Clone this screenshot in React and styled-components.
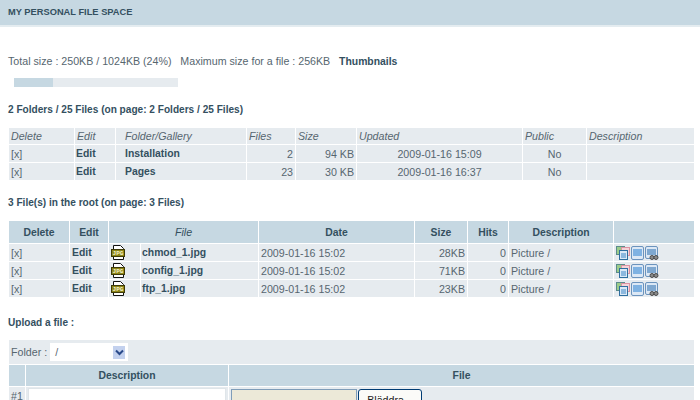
import React from "react";
import styled, { createGlobalStyle } from "styled-components";

const GlobalStyle = createGlobalStyle`
  html, body {
    margin: 0;
    padding: 0;
    background: #fff;
    overflow: hidden;
  }
  body {
    font-family: "Liberation Sans", Arial, sans-serif;
    font-size: 8pt;
    color: #56666f;
  }
`;

const Page = styled.div`
  width: 700px;
  height: 400px;
  overflow: hidden;
`;
const TitleBar = styled.div`
  height: 25px;
  line-height: 25px;
  padding-left: 8px;
  background: #c6d8e2;
  border-bottom: 2px solid #e4ecf0;
  font-size: 9.3px;
  font-weight: bold;
  color: #34505f;
`;
const Content = styled.div`
  padding: 0 5px 0 8px;
`;
const SizeLine = styled.div`
  margin-top: 27px;
  height: 14px;
  line-height: 14px;
  white-space: pre;
`;
const Thumbs = styled.b`
  font-size: 10.4px;
  color: #34505f;
`;
const Meter = styled.div`
  width: 164px;
  height: 9px;
  margin: 10px 0 0 6px;
  background: #e6ebef;
`;
const MeterFill = styled.div`
  height: 100%;
  background: #c6d8e2;
`;
const Heading = styled.div`
  height: 14px;
  line-height: 14px;
  margin-top: ${(p) => p.$top}px;
  font-size: 10.1px;
  font-weight: bold;
  color: #34505f;
`;
const Table = styled.table`
  width: 687px;
  margin: ${(p) => p.$top}px 0 0 0;
  border-collapse: separate;
  border-spacing: 1px;
  table-layout: fixed;
  font-size: 8pt;
`;
const Th = styled.th`
  height: ${(p) => p.$h || (p.$plain ? 16 : 22)}px;
  padding: 0 0 0 ${(p) => p.$indent || (p.$plain ? 2 : 0)}px;
  background: ${(p) => (p.$plain ? "#e6ebef" : "#c6d8e2")};
  color: ${(p) => (p.$plain ? "#56666f" : "#34505f")};
  font-size: ${(p) => (p.$plain || p.$italic ? "8pt" : "10.4px")};
  font-weight: ${(p) => (p.$plain || p.$italic ? "normal" : "bold")};
  font-style: ${(p) => (p.$plain || p.$italic ? "italic" : "normal")};
  text-align: ${(p) => (p.$plain ? "left" : "center")};
`;
const Td = styled.td`
  height: ${(p) => p.$h || 17}px;
  padding: 0 2px 0 ${(p) => p.$indent || 2}px;
  background: #e6ebef;
  text-align: ${(p) => p.$align || "left"};
  font-size: ${(p) => (p.$bold ? "10.4px" : "8pt")};
  font-weight: ${(p) => (p.$bold ? "bold" : "normal")};
  color: ${(p) => (p.$bold ? "#34505f" : "#56666f")};
  white-space: nowrap;
  overflow: hidden;
`;
const UploadCell = styled(Td)`
  height: 24px;
  padding-top: ${(p) => p.$pad}px;
  vertical-align: top;
`;
const Actions = styled.span`
  display: flex;
`;
const Folder = styled.div`
  display: flex;
  align-items: center;
  width: 685px;
  height: 24px;
  margin: 10px 0 0 1px;
  padding-left: 2px;
  box-sizing: border-box;
  background: #e6ebef;
`;
const FolderSelect = styled.span`
  display: flex;
  align-items: center;
  justify-content: space-between;
  width: 78px;
  height: 18px;
  margin-left: 3px;
  padding: 0 3px 0 5px;
  box-sizing: border-box;
  background: #fff;
`;
const SelectArrow = styled.span`
  display: flex;
  align-items: center;
  justify-content: center;
  width: 12px;
  height: 13px;
  background: #c3d1ee;
`;
const UploadTable = styled(Table)`
  margin-top: 0;
`;
const TextInput = styled.div`
  height: 20px;
  background: #fff;
  border: 1px solid #dfe5e9;
  box-sizing: border-box;
`;
const FileRow = styled.div`
  display: flex;
  gap: 1px;
`;
const FilePath = styled.div`
  width: 126px;
  height: 20px;
  background: #ece9d8;
  border: 1px solid #7f9db9;
  box-sizing: border-box;
`;
const Browse = styled.div`
  width: 64px;
  height: 22px;
  line-height: 21px;
  text-align: center;
  background: #fbfbf8;
  border: 1px solid #003c74;
  border-radius: 3px;
  box-sizing: border-box;
  color: #222;
`;

const JpgIcon = () => (
  <svg width="15" height="15" viewBox="0 0 15 15" style={{ display: "block" }}>
    <path d="M2.5 .5h7l3 3v11h-10z" fill="#fff" stroke="#111" />
    <rect x=".5" y="4.5" width="13" height="7" fill="#8c8518" stroke="#3d3a08" />
    <text x="7" y="10.2" textAnchor="middle" fontFamily="Liberation Mono, monospace" fontSize="6" fontWeight="bold" fill="#f6f2c8">
      JPG
    </text>
  </svg>
);

const CopyIcon = () => (
  <svg width="15" height="14" viewBox="0 0 15 14" style={{ display: "block" }}>
    <rect x=".5" y=".5" width="8" height="8" fill="#9ccc8a" stroke="#5b8c8c" />
    <rect x="5.5" y="1.5" width="8" height="8" fill="#f5d3d8" stroke="#dc94a2" />
    <rect x="3.5" y="4.5" width="8" height="9" fill="#dbe9f6" stroke="#2f6f9f" />
    <rect x="5" y="7" width="5" height="5" fill="#8cb8de" />
  </svg>
);
const ViewIcon = () => (
  <svg width="14" height="14" viewBox="0 0 14 14" style={{ display: "block" }}>
    <rect x=".5" y=".5" width="12" height="13" rx="1.5" fill="#dce8f5" stroke="#6b93bd" />
    <rect x="2" y="3" width="9" height="7" fill="#7fb2e2" />
  </svg>
);
const ZoomIcon = () => (
  <svg width="14" height="14" viewBox="0 0 14 14" style={{ display: "block" }}>
    <rect x=".5" y=".5" width="12" height="12" rx="1.5" fill="#dce8f5" stroke="#6b93bd" />
    <rect x="2" y="3" width="9" height="6" fill="#7fa8d0" />
    <circle cx="7" cy="11.5" r="2" fill="#8a8a8a" stroke="#4a4a4a" />
    <circle cx="11" cy="11.5" r="2" fill="#8a8a8a" stroke="#4a4a4a" />
  </svg>
);
const Arrow = () => (
  <svg width="9" height="7" viewBox="0 0 9 7">
    <path d="M1 1.5l3.5 3.5L8 1.5" fill="none" stroke="#2a4a8a" strokeWidth="2" />
  </svg>
);

const folders = [
  { name: "Installation", files: 2, size: "94 KB", updated: "2009-01-16 15:09" },
  { name: "Pages", files: 23, size: "30 KB", updated: "2009-01-16 16:37" },
];
const files = [
  { name: "chmod_1.jpg", size: "28KB" },
  { name: "config_1.jpg", size: "71KB" },
  { name: "ftp_1.jpg", size: "23KB" },
];

export default function App() {
  return (
    <Page>
      <GlobalStyle />
      <TitleBar>MY PERSONAL FILE SPACE</TitleBar>
      <Content>
        <SizeLine>
          Total size : 250KB / 1024KB (24%)   Maximum size for a file : 256KB   <Thumbs>Thumbnails</Thumbs>
        </SizeLine>
        <Meter>
          <MeterFill style={{ width: "24%" }} />
        </Meter>
        <Heading $top={16}>2 Folders / 25 Files (on page: 2 Folders / 25 Files)</Heading>
        <Table $top={10}>
          <colgroup>
            <col width="65" />
            <col width="40" />
            <col width="130" />
            <col width="48" />
            <col width="60" />
            <col width="165" />
            <col width="63" />
            <col />
          </colgroup>
          <thead>
            <tr>
              <Th $plain>Delete</Th>
              <Th $plain>Edit</Th>
              <Th $plain $indent={9}>Folder/Gallery</Th>
              <Th $plain>Files</Th>
              <Th $plain>Size</Th>
              <Th $plain>Updated</Th>
              <Th $plain>Public</Th>
              <Th $plain>Description</Th>
            </tr>
          </thead>
          <tbody>
            {folders.map((f) => (
              <tr key={f.name}>
                <Td>[x]</Td>
                <Td $bold $indent={1}>Edit</Td>
                <Td $bold $indent={9}>{f.name}</Td>
                <Td $align="right">{f.files}</Td>
                <Td $align="right">{f.size}</Td>
                <Td $align="center">{f.updated}</Td>
                <Td $align="center">No</Td>
                <Td />
              </tr>
            ))}
          </tbody>
        </Table>
        <Heading $top={15}>3 File(s) in the root (on page: 3 Files)</Heading>
        <Table $top={10}>
          <colgroup>
            <col width="60" />
            <col width="38" />
            <col width="31" />
            <col width="117" />
            <col width="155" />
            <col width="52" />
            <col width="40" />
            <col width="104" />
            <col />
          </colgroup>
          <thead>
            <tr>
              <Th>Delete</Th>
              <Th>Edit</Th>
              <Th $italic colSpan={2}>File</Th>
              <Th>Date</Th>
              <Th>Size</Th>
              <Th>Hits</Th>
              <Th>Description</Th>
              <Th />
            </tr>
          </thead>
          <tbody>
            {files.map((f) => (
              <tr key={f.name}>
                <Td>[x]</Td>
                <Td $bold>Edit</Td>
                <Td $indent={2}><JpgIcon /></Td>
                <Td $bold $indent={1}>{f.name}</Td>
                <Td>2009-01-16 15:02</Td>
                <Td $align="right">{f.size}</Td>
                <Td $align="right">0</Td>
                <Td>Picture /</Td>
                <Td>
                  <Actions>
                    <CopyIcon />
                    <ViewIcon />
                    <ZoomIcon />
                  </Actions>
                </Td>
              </tr>
            ))}
          </tbody>
        </Table>
        <Heading $top={18}>Upload a file :</Heading>
        <Folder>
          Folder :
          <FolderSelect>
            /
            <SelectArrow><Arrow /></SelectArrow>
          </FolderSelect>
        </Folder>
        <UploadTable>
          <colgroup>
            <col width="16" />
            <col width="202" />
            <col />
          </colgroup>
          <thead>
            <tr>
              <Th $h={21} />
              <Th $h={21}>Description</Th>
              <Th $h={21}>File</Th>
            </tr>
          </thead>
          <tbody>
            <tr>
              <UploadCell $pad={3}>#1</UploadCell>
              <UploadCell $pad={1}><TextInput /></UploadCell>
              <UploadCell $pad={2}>
                <FileRow>
                  <FilePath />
                  <Browse>Bläddra...</Browse>
                </FileRow>
              </UploadCell>
            </tr>
          </tbody>
        </UploadTable>
      </Content>
    </Page>
  );
}
